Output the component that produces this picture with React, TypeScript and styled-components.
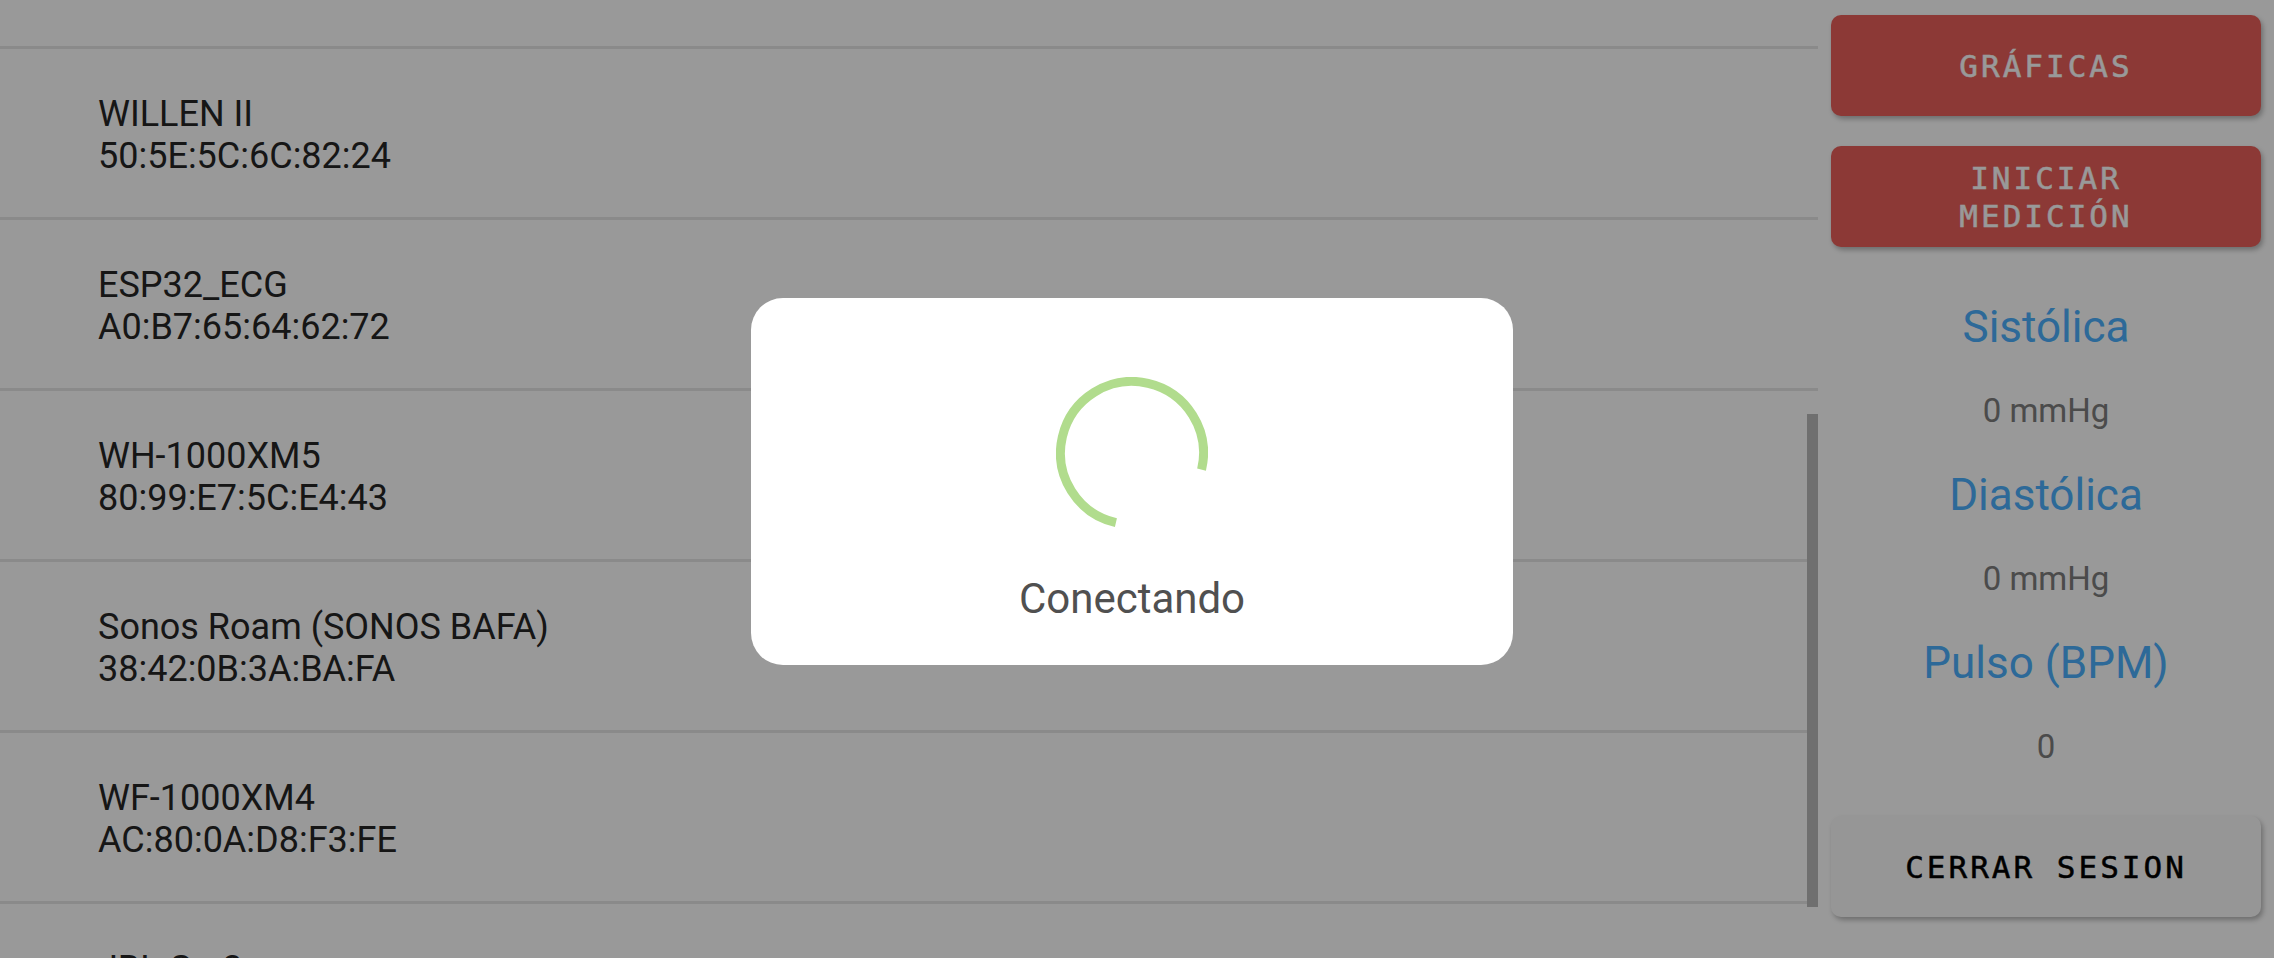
import React from 'react';
import styled, { createGlobalStyle } from 'styled-components';

const GlobalStyle = createGlobalStyle`
  html, body {
    margin: 0;
    padding: 0;
    width: 2274px;
    height: 958px;
    overflow: hidden;
    background: #ffffff;
    font-family: Roboto, "Noto Sans", sans-serif;
  }
`;

const Screen = styled.div`
  position: relative;
  display: flex;
  width: 2274px;
  height: 958px;
  overflow: hidden;
  background: #ffffff;
`;

const DeviceList = styled.div`
  position: relative;
  width: 1818px;
  height: 958px;
  overflow: hidden;
`;

const DeviceRows = styled.div`
  display: flex;
  flex-direction: column;
  margin-top: -122px;
`;

const DeviceRow = styled.div`
  box-sizing: border-box;
  height: 171px;
  flex-shrink: 0;
  display: flex;
  flex-direction: column;
  justify-content: center;
  padding: 4px 0 0 98px;
  border-bottom: 3px solid #e6e6e6;
  color: #262626;
  font-size: 36px;
  line-height: 42px;
`;

const ScrollThumb = styled.div`
  position: absolute;
  left: 1807px;
  top: 414px;
  width: 11px;
  height: 493px;
  background: #b9b9b9;
`;

const SidePanel = styled.div`
  box-sizing: border-box;
  width: 456px;
  padding: 15px 13px 0 13px;
  display: flex;
  flex-direction: column;
  align-items: stretch;
`;

const ActionButton = styled.button<{ $light?: boolean; $top?: number }>`
  height: 101px;
  margin-top: ${p => p.$top ?? 0}px;
  border: none;
  border-radius: 10px;
  background: ${p => (p.$light ? '#fbfbfb' : '#e9605b')};
  color: ${p => (p.$light ? '#000000' : '#ffffff')};
  box-shadow: 2px 3px 5px rgba(0, 0, 0, 0.28);
  font-family: "DejaVu Sans Mono", "Liberation Mono", monospace;
  font-size: 31px;
  line-height: 38px;
  letter-spacing: 3px;
  -webkit-text-stroke: 0.5px currentColor;
  text-transform: uppercase;
  display: flex;
  align-items: center;
  justify-content: center;
  text-align: center;
  padding: 0 60px;
`;

const Stats = styled.div`
  margin-top: 54px;
  display: flex;
  flex-direction: column;
  align-items: center;
  gap: 39px;
`;

const StatTitle = styled.div`
  color: #4bb0fd;
  font-size: 44px;
  line-height: 52px;
`;

const StatValue = styled.div`
  color: #7d7d7d;
  font-size: 33px;
  line-height: 38px;
`;

const Overlay = styled.div`
  position: absolute;
  inset: 0;
  background: rgba(0, 0, 0, 0.4);
  display: flex;
  align-items: center;
  justify-content: center;
  padding: 5px 10px 0 0;
  box-sizing: border-box;
`;

const Dialog = styled.div`
  width: 762px;
  height: 367px;
  box-sizing: border-box;
  background: #ffffff;
  border-radius: 32px;
  padding-top: 79px;
  display: flex;
  flex-direction: column;
  align-items: center;
`;

const Spinner = styled.svg`
  width: 152px;
  height: 152px;
  display: block;
`;

const DialogText = styled.div`
  margin-top: 46px;
  color: #505050;
  font-size: 42px;
  line-height: 48px;
`;

const devices = [
  { name: 'Galaxy Buds2', mac: '3C:A2:C3:1E:90:5B' },
  { name: 'WILLEN II', mac: '50:5E:5C:6C:82:24' },
  { name: 'ESP32_ECG', mac: 'A0:B7:65:64:62:72' },
  { name: 'WH-1000XM5', mac: '80:99:E7:5C:E4:43' },
  { name: 'Sonos Roam (SONOS BAFA)', mac: '38:42:0B:3A:BA:FA' },
  { name: 'WF-1000XM4', mac: 'AC:80:0A:D8:F3:FE' },
  { name: 'JBL Go 3', mac: 'F8:5C:7D:11:2A:90' },
];

const stats = [
  { title: 'Sistólica', value: '0 mmHg' },
  { title: 'Diastólica', value: '0 mmHg' },
  { title: 'Pulso (BPM)', value: '0' },
];

const R = 71.5;
const C = 2 * Math.PI * R;

export default function App() {
  return (
    <>
      <GlobalStyle />
      <Screen>
        <DeviceList>
          <DeviceRows>
            {devices.map(d => (
              <DeviceRow key={d.mac}>
                <div>{d.name}</div>
                <div>{d.mac}</div>
              </DeviceRow>
            ))}
          </DeviceRows>
          <ScrollThumb />
        </DeviceList>
        <SidePanel>
          <ActionButton>Gráficas</ActionButton>
          <ActionButton $top={30}>Iniciar medición</ActionButton>
          <Stats>
            {stats.map(s => (
              <React.Fragment key={s.title}>
                <StatTitle>{s.title}</StatTitle>
                <StatValue>{s.value}</StatValue>
              </React.Fragment>
            ))}
          </Stats>
          <ActionButton $light $top={50}>Cerrar sesion</ActionButton>
        </SidePanel>
        <Overlay>
          <Dialog>
            <Spinner viewBox="0 0 152 152">
              <circle
                cx="76"
                cy="76"
                r={R}
                fill="none"
                stroke="#b1dc8d"
                strokeWidth="9"
                strokeDasharray={`${(C * 270) / 360} ${C}`}
                transform="rotate(103 76 76)"
              />
            </Spinner>
            <DialogText>Conectando</DialogText>
          </Dialog>
        </Overlay>
      </Screen>
    </>
  );
}
